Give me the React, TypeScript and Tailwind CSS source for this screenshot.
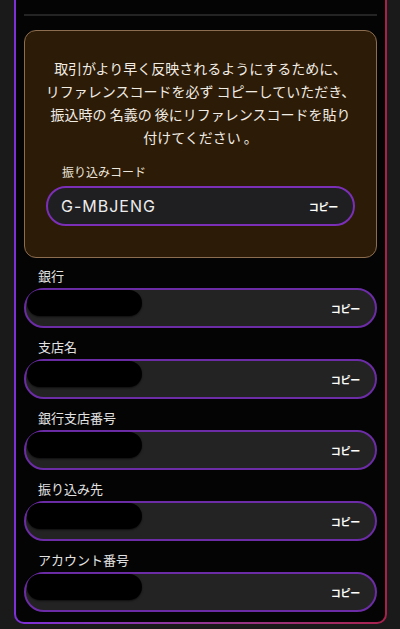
import { ReactNode } from 'react';

const fields = ['銀行', '支店名', '銀行支店番号', '振り込み先', 'アカウント番号'];

function CopyLabel() {
  return <span className="text-[10px] font-bold text-white tracking-tight">コピー</span>;
}

function Field({ label }: { label: string }) {
  return (
    <div className="flex flex-col">
      <div className="h-4 pl-[14px] text-[13px] leading-4 text-[#e2e2e2]">{label}</div>
      <div className="mt-1 flex h-10 items-center justify-between rounded-full border-2 border-[#6c2ca6] bg-[#232323] pr-[15px]">
        <div className="ml-[1px] h-[26px] w-[115px] self-start rounded-full bg-black shadow-[0_1px_2px_rgba(0,0,0,0.6)]" />
        <CopyLabel />
      </div>
    </div>
  );
}

function Notice({ children }: { children: ReactNode }) {
  return (
    <div className="rounded-[12px] border border-[#8c6d50] bg-[#2c1b06] px-[21px] pt-[26px] pb-[31px]">
      {children}
    </div>
  );
}

export default function App() {
  return (
    <div
      className="min-h-[629px] bg-[#1a1a1a] pb-[8px]"
      style={{ fontFamily: '"Noto Sans CJK JP", "Noto Sans", Inter, sans-serif' }}
    >
      <div className="ml-[14px] mr-[13px] rounded-b-[10px] bg-gradient-to-r from-[#7d2fd8] to-[#a8204c] px-[2px] pb-[2px]">
        <div className="rounded-b-[8px] bg-[#040404] px-2 pb-[10px]">
          <div className="h-[14px]" />
          <div className="h-[2px] bg-[#242424]" />
          <div className="mt-[14px]">
            <Notice>
              <p className="-mx-[10px] whitespace-nowrap text-center text-[14px] leading-[23px] text-[#f1ece4]">
                取引がより早く反映されるようにするために、
                <br />
                リファレンスコードを必ず コピーしていただき、
                <br />
                振込時の 名義の 後にリファレンスコードを貼り
                <br />
                付けてください 。
              </p>
              <div className="mt-[15px] h-4 pl-[16px] text-[12px] leading-4 text-[#ece6dc]">振り込みコード</div>
              <div className="mt-[6px] flex h-10 items-center justify-between rounded-full border-2 border-[#7a2fb6] bg-[#1f1f21] pl-[13px] pr-[15px]">
                <span className="text-[16px] tracking-[1px] text-[#ececec]" style={{ fontFamily: 'Inter, "Noto Sans", sans-serif' }}>
                  G-MBJENG
                </span>
                <CopyLabel />
              </div>
            </Notice>
          </div>
          <div className="mt-[10px] flex flex-col gap-[11px]">
            {fields.map((f) => (
              <Field key={f} label={f} />
            ))}
          </div>
        </div>
      </div>
    </div>
  );
}
